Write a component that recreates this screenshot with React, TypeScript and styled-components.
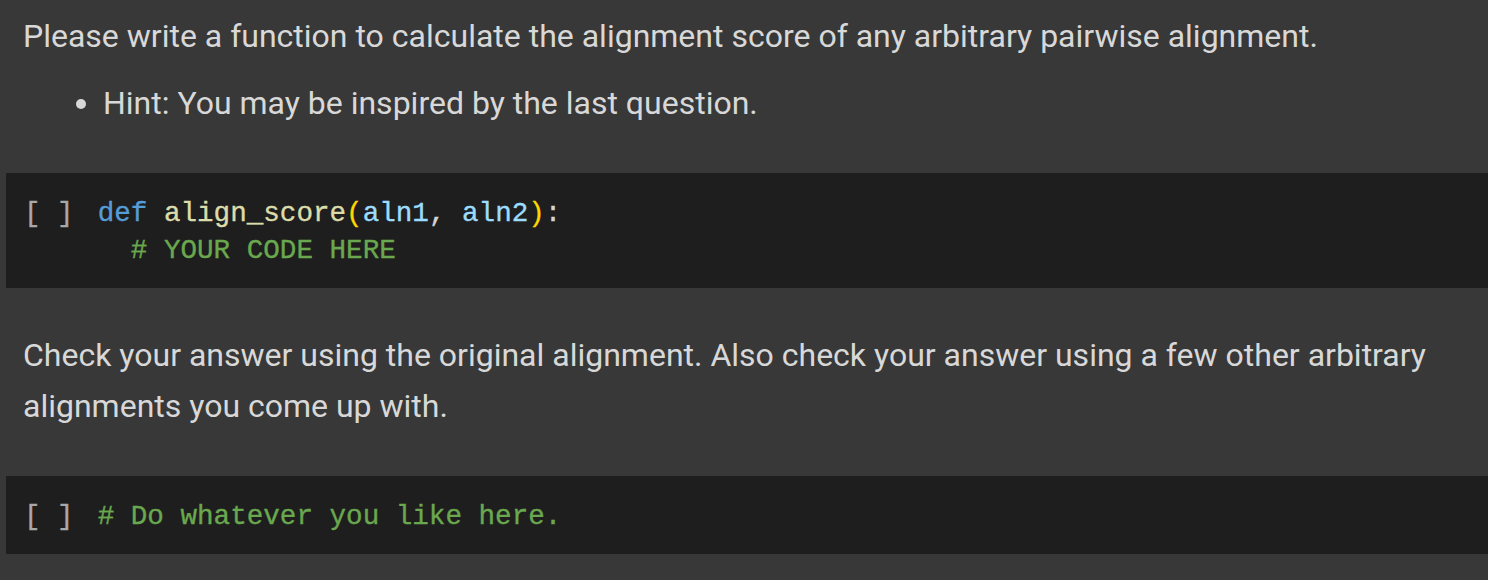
import styled, { createGlobalStyle } from 'styled-components'

const GlobalStyle = createGlobalStyle`
    html, body {
        margin: 0;
        padding: 0;
        background-color: #383838;
    }
`

function App() {
  return (
    <>
      <GlobalStyle />
      <Notebook>
        <TextCell $clipped>
          <Paragraph>Please write a function to calculate the alignment score of any arbitrary pairwise alignment.</Paragraph>
          <BulletList>
            <li>Hint: You may be inspired by the last question.</li>
          </BulletList>
        </TextCell>

        <CodeCell>
          <RunBrackets>[ ]</RunBrackets>
          <Code>
            <Keyword>def</Keyword> <FuncName>align_score</FuncName><Paren>(</Paren>
            <Param>aln1</Param>, <Param>aln2</Param><Paren>)</Paren>:{'\n'}
            {'  '}<Comment># YOUR CODE HERE</Comment>
          </Code>
        </CodeCell>

        <TextCell>
          <Paragraph>
            Check your answer using the original alignment. Also check your answer using a few other arbitrary
            alignments you come up with.
          </Paragraph>
        </TextCell>

        <CodeCell>
          <RunBrackets>[ ]</RunBrackets>
          <Code>
            <Comment># Do whatever you like here.</Comment>
          </Code>
        </CodeCell>
      </Notebook>
    </>
  )
}

const Notebook = styled.main`
    display: flex;
    flex-direction: column;
    padding-left: 6px;
`

// Text cells

const TextCell = styled.section<{ $clipped?: boolean }>`
    padding: ${p => (p.$clipped ? '11px' : '42px')} 30px 44px 17px;

    color: #d8d8d8;
    font-family: Roboto, "Liberation Sans", sans-serif;
    font-size: 32px;
    line-height: 51px;
`

const Paragraph = styled.p`
    margin: 0;
`

const BulletList = styled.ul`
    margin: 16px 0 0;
    padding-left: 80px;
`

// Code cells

const CodeCell = styled.section`
    display: flex;
    align-items: flex-start;
    gap: 24px;
    padding: 22px 16px 19px 18px;

    background-color: #1e1e1e;
    font-family: "Liberation Mono", monospace;
    font-size: 27.6px;
    line-height: 37px;
    -webkit-text-stroke: 0.35px currentColor;
`

const RunBrackets = styled.span`
    color: #a8a8a8;
    white-space: pre;
`

const Code = styled.pre`
    margin: 0;
    font: inherit;
    color: #d4d4d4;
    white-space: pre;
`

const Keyword = styled.span`
    color: #569cd6;
`

const FuncName = styled.span`
    color: #dcdcaa;
`

const Paren = styled.span`
    color: #ffd700;
`

const Param = styled.span`
    color: #9cdcfe;
`

const Comment = styled.span`
    color: #6aa84f;
`

export default App
